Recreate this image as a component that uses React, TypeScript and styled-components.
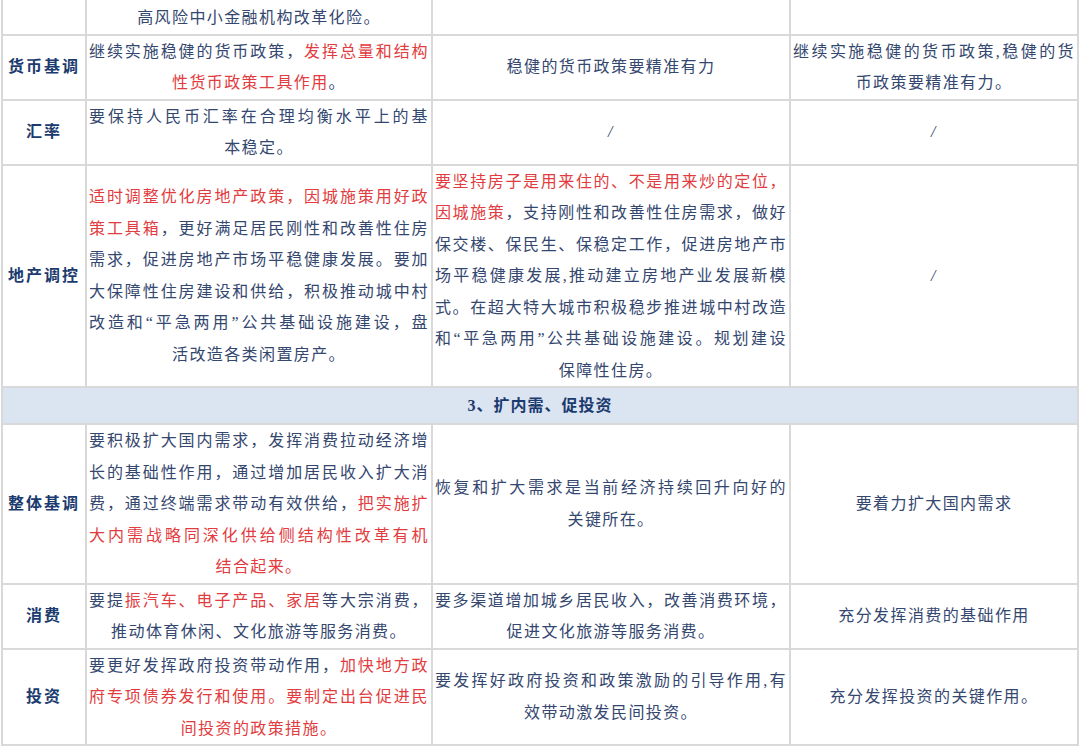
import React from 'react';
import styled, { createGlobalStyle } from 'styled-components';

const GlobalStyle = createGlobalStyle`
  html, body {
    margin: 0;
    padding: 0;
    background: #ffffff;
  }
  body {
    font-family: 'Liberation Serif', 'Noto Sans CJK SC', serif;
  }
`;

const Table = styled.table`
  border-collapse: collapse;
  table-layout: fixed;
  width: 1076px;
  margin-left: 1px;
  font-size: 16px;
  letter-spacing: 1.4px;
  color: #34476f;
`;

const Row = styled.tr<{ $first?: boolean }>`
  td {
    border-top: ${(p) => (p.$first ? 'none' : '2px solid #d9d9d9')};
  }
`;

const Cell = styled.td`
  border: 2px solid #d9d9d9;
  padding: 0 2px;
  vertical-align: middle;
  line-height: 31.5px;
  text-align: center;
`;

const TopCell = styled(Cell)`
  padding-top: 2px;
`;

const Label = styled(Cell)`
  font-weight: bold;
  color: #1b3b6f;
  letter-spacing: 2px;
  padding: 0;
`;

const SectionCell = styled.td`
  background: #dbe4f1;
  border: 2px solid #d9d9d9;
  height: 35px;
  padding: 0;
  text-align: center;
  font-weight: bold;
  color: #1b3b6f;
  letter-spacing: 1px;
  line-height: 35px;
`;

const Line = styled.span<{ $end?: boolean }>`
  display: block;
  text-align: justify;
  text-align-last: ${(p) => (p.$end ? 'center' : 'justify')};
`;

const Red = styled.span`
  color: #e23c40;
`;

const Slash = styled.span`
  font-style: italic;
  color: #2f4068;
`;

export default function App() {
  return (
    <>
      <GlobalStyle />
      <Table>
        <colgroup>
          <col style={{ width: 84 }} />
          <col style={{ width: 346 }} />
          <col style={{ width: 358 }} />
          <col style={{ width: 288 }} />
        </colgroup>
        <tbody>
          <Row $first>
            <Label />
            <TopCell>
              <Line $end>高风险中小金融机构改革化险。</Line>
            </TopCell>
            <TopCell />
            <TopCell />
          </Row>

          <Row>
            <Label>货币基调</Label>
            <Cell>
              <Line>
                继续实施稳健的货币政策，<Red>发挥总量和结构</Red>
              </Line>
              <Line $end>
                <Red>性货币政策工具作用</Red>。
              </Line>
            </Cell>
            <Cell>
              <Line $end>稳健的货币政策要精准有力</Line>
            </Cell>
            <Cell>
              <Line>继续实施稳健的货币政策,稳健的货</Line>
              <Line $end>币政策要精准有力。</Line>
            </Cell>
          </Row>

          <Row>
            <Label>汇率</Label>
            <Cell>
              <Line>要保持人民币汇率在合理均衡水平上的基</Line>
              <Line $end>本稳定。</Line>
            </Cell>
            <Cell>
              <Slash>/</Slash>
            </Cell>
            <Cell>
              <Slash>/</Slash>
            </Cell>
          </Row>

          <Row>
            <Label>地产调控</Label>
            <Cell>
              <Line>
                <Red>适时调整优化房地产政策，因城施策用好政</Red>
              </Line>
              <Line>
                <Red>策工具箱</Red>，更好满足居民刚性和改善性住房
              </Line>
              <Line>需求，促进房地产市场平稳健康发展。要加</Line>
              <Line>大保障性住房建设和供给，积极推动城中村</Line>
              <Line>改造和“平急两用”公共基础设施建设，盘</Line>
              <Line $end>活改造各类闲置房产。</Line>
            </Cell>
            <Cell>
              <Line>
                <Red>要坚持房子是用来住的、不是用来炒的定位，</Red>
              </Line>
              <Line>
                <Red>因城施策</Red>，支持刚性和改善性住房需求，做好
              </Line>
              <Line>保交楼、保民生、保稳定工作，促进房地产市</Line>
              <Line>场平稳健康发展,推动建立房地产业发展新模</Line>
              <Line>式。在超大特大城市积极稳步推进城中村改造</Line>
              <Line>和“平急两用”公共基础设施建设。规划建设</Line>
              <Line $end>保障性住房。</Line>
            </Cell>
            <Cell>
              <Slash>/</Slash>
            </Cell>
          </Row>

          <Row>
            <SectionCell colSpan={4}>3、扩内需、促投资</SectionCell>
          </Row>

          <Row>
            <Label>整体基调</Label>
            <Cell>
              <Line>要积极扩大国内需求，发挥消费拉动经济增</Line>
              <Line>长的基础性作用，通过增加居民收入扩大消</Line>
              <Line>
                费，通过终端需求带动有效供给，<Red>把实施扩</Red>
              </Line>
              <Line>
                <Red>大内需战略同深化供给侧结构性改革有机</Red>
              </Line>
              <Line $end>
                <Red>结合起来。</Red>
              </Line>
            </Cell>
            <Cell>
              <Line>恢复和扩大需求是当前经济持续回升向好的</Line>
              <Line $end>关键所在。</Line>
            </Cell>
            <Cell>
              <Line $end>要着力扩大国内需求</Line>
            </Cell>
          </Row>

          <Row>
            <Label>消费</Label>
            <Cell>
              <Line>
                要提<Red>振汽车、电子产品、家居</Red>等大宗消费，
              </Line>
              <Line $end>推动体育休闲、文化旅游等服务消费。</Line>
            </Cell>
            <Cell>
              <Line>要多渠道增加城乡居民收入，改善消费环境，</Line>
              <Line $end>促进文化旅游等服务消费。</Line>
            </Cell>
            <Cell>
              <Line $end>充分发挥消费的基础作用</Line>
            </Cell>
          </Row>

          <Row>
            <Label>投资</Label>
            <Cell>
              <Line>
                要更好发挥政府投资带动作用，<Red>加快地方政</Red>
              </Line>
              <Line>
                <Red>府专项债券发行和使用。要制定出台促进民</Red>
              </Line>
              <Line $end>
                <Red>间投资的政策措施。</Red>
              </Line>
            </Cell>
            <Cell>
              <Line>要发挥好政府投资和政策激励的引导作用,有</Line>
              <Line $end>效带动激发民间投资。</Line>
            </Cell>
            <Cell>
              <Line $end>充分发挥投资的关键作用。</Line>
            </Cell>
          </Row>
        </tbody>
      </Table>
    </>
  );
}
